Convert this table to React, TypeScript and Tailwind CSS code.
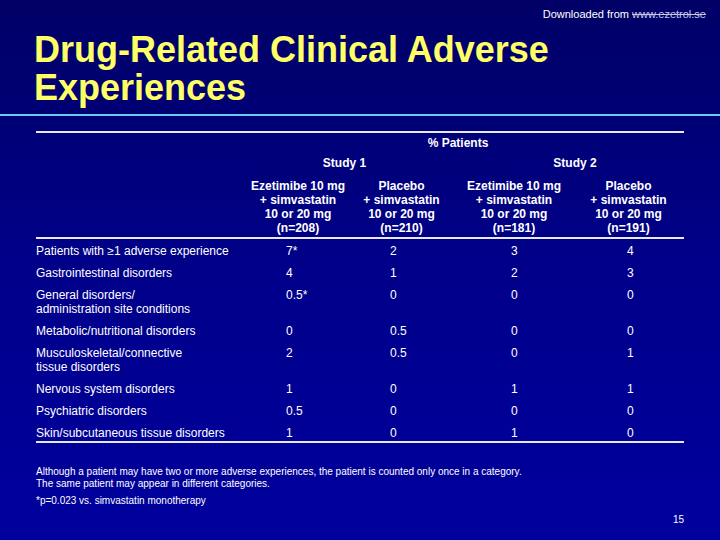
const cols = [
  { head: ["Ezetimibe 10 mg", "+ simvastatin", "10 or 20 mg", "(n=208)"], pad: "pl-[38px]" },
  { head: ["Placebo", "+ simvastatin", "10 or 20 mg", "(n=210)"], pad: "pl-[42px]" },
  { head: ["Ezetimibe 10 mg", "+ simvastatin", "10 or 20 mg", "(n=181)"], pad: "pl-[56px]" },
  { head: ["Placebo", "+ simvastatin", "10 or 20 mg", "(n=191)"], pad: "pl-[54px]" },
]

const rows: { label: string[]; values: string[] }[] = [
  { label: ["Patients with \u22651 adverse experience"], values: ["7*", "2", "3", "4"] },
  { label: ["Gastrointestinal disorders"], values: ["4", "1", "2", "3"] },
  { label: ["General disorders/", "administration site conditions"], values: ["0.5*", "0", "0", "0"] },
  { label: ["Metabolic/nutritional disorders"], values: ["0", "0.5", "0", "0"] },
  { label: ["Musculoskeletal/connective", "tissue disorders"], values: ["2", "0.5", "0", "1"] },
  { label: ["Nervous system disorders"], values: ["1", "0", "1", "1"] },
  { label: ["Psychiatric disorders"], values: ["0.5", "0", "0", "0"] },
  { label: ["Skin/subcutaneous tissue disorders"], values: ["1", "0", "1", "0"] },
]

const grid = "grid grid-cols-[212px_100px_107px_118px_111px]"

export default function App() {
  return (
    <div className="w-[720px] h-[540px] overflow-hidden bg-gradient-to-b from-[#000066] via-[#00008a] to-[#00009e] text-white font-['Liberation_Sans',Arial,sans-serif] flex flex-col">
      <div className="pt-[8px] pr-[14px] text-right text-[11px] leading-[12px]">
        Downloaded from <span className="text-[#c8c8e6] line-through">www.ezetrol.se</span>
      </div>

      <h1 className="mt-[11px] pl-[34px] text-[36px] leading-[38px] font-bold text-[#ffff66]">
        Drug-Related Clinical Adverse
        <br />
        Experiences
      </h1>

      <div className="mt-[7px] h-[2px] w-full bg-[#66ccff]" />

      <div className="mt-[15px] ml-[36px] w-[648px] text-[12px] leading-[14px]">
        <div className="h-[2px] bg-[#e8e8f4]" />

        <div className={`${grid} mt-[3px] font-bold`}>
          <div />
          <div className="col-span-4 text-center pr-[16px]">% Patients</div>
        </div>

        <div className={`${grid} mt-[6px] font-bold`}>
          <div />
          <div className="col-span-2 text-center pr-[14px]">Study 1</div>
          <div className="col-span-2 text-center pl-[11px]">Study 2</div>
        </div>

        <div className={`${grid} mt-[9px] font-bold`}>
          <div />
          {cols.map((c, i) => (
            <div key={i} className="text-center">
              {c.head.map((h) => (
                <div key={h}>{h}</div>
              ))}
            </div>
          ))}
        </div>

        <div className="mt-[2px] h-[2px] bg-[#e8e8f4]" />

        {rows.map((r, i) => (
          <div key={i} className={`${grid} py-[4px] ${i === 0 ? "pt-[5px]" : ""}`}>
            <div>
              {r.label.map((l) => (
                <div key={l}>{l}</div>
              ))}
            </div>
            {r.values.map((v, j) => (
              <div key={j} className={cols[j].pad}>
                {v}
              </div>
            ))}
          </div>
        ))}

        <div className="-mt-[3px] h-[2px] bg-[#e8e8f4]" />

        <div className="mt-[23px] text-[10px] leading-[12px]">
          <p>Although a patient may have two or more adverse experiences, the patient is counted only once in a category.</p>
          <p>The same patient may appear in different categories.</p>
          <p className="mt-[5px]">*p=0.023 vs. simvastatin monotherapy</p>
        </div>

        <div className="mt-[7px] text-right text-[10px] leading-[12px]">15</div>
      </div>
    </div>
  )
}
